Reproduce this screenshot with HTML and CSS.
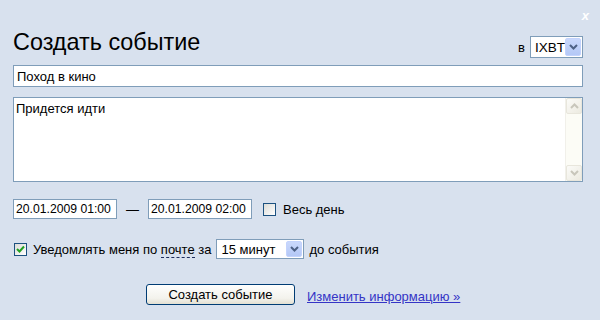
FILE: index.html
```html
<!DOCTYPE html>
<html>
  <head>
    <meta charset="UTF-8">
    <title>Создать событие</title>
    <link rel="stylesheet" href="styles.css">
  </head>
  <body>
    <div class="dialog">
      <a href="javascript:;" class="close">x</a>

      <div class="head">
        <h1 class="title">Создать событие</h1>
        <div class="calendar">
          <span class="calendar-label">в</span>
          <div class="select select-calendar">
            <span class="select-value">IXBT</span>
            <span class="select-arrow">
              <svg width="9" height="6" viewBox="0 0 9 6"><path d="M1 1 L4.5 4.5 L8 1" fill="none" stroke="#4d6185" stroke-width="2"/></svg>
            </span>
          </div>
        </div>
      </div>

      <div class="field field-name">Поход в кино</div>

      <div class="field field-text">
        <div class="field-text-value">Придется идти</div>
        <div class="scrollbar">
          <span class="scroll-btn">
            <svg width="9" height="6" viewBox="0 0 9 6"><path d="M1 5 L4.5 1.5 L8 5" fill="none" stroke="#c8c6bb" stroke-width="2"/></svg>
          </span>
          <span class="scroll-track"></span>
          <span class="scroll-btn">
            <svg width="9" height="6" viewBox="0 0 9 6"><path d="M1 1 L4.5 4.5 L8 1" fill="none" stroke="#c8c6bb" stroke-width="2"/></svg>
          </span>
        </div>
      </div>

      <div class="row row-dates">
        <div class="field field-date">20.01.2009 01:00</div>
        <span class="dash">—</span>
        <div class="field field-date">20.01.2009 02:00</div>
        <span class="checkbox checkbox-allday"></span>
        <span class="label">Весь день</span>
      </div>

      <div class="row row-notify">
        <span class="checkbox checkbox-notify checked">
          <svg width="9" height="8" viewBox="0 0 9 8"><path d="M1 4 L3.5 6.5 L8 1.5" fill="none" stroke="#21a121" stroke-width="2"/></svg>
        </span>
        <span class="label">Уведомлять меня по <span class="dotted">почте</span> за</span>
        <div class="select select-remind">
          <span class="select-value">15 минут</span>
          <span class="select-arrow">
            <svg width="9" height="6" viewBox="0 0 9 6"><path d="M1 1 L4.5 4.5 L8 1" fill="none" stroke="#4d6185" stroke-width="2"/></svg>
          </span>
        </div>
        <span class="label">до события</span>
      </div>

      <div class="actions">
        <a href="javascript:;" class="button">Создать событие</a>
        <a href="javascript:;" class="more">Изменить информацию »</a>
      </div>
    </div>
  </body>
</html>
```

FILE: styles.css
```css
* {
  margin: 0;
  padding: 0;
  box-sizing: border-box;
}

body {
  background-color: #d8e1ee;
  font-family: "Liberation Sans", Arial, sans-serif;
  font-size: 13px;
  color: #000;
}

.dialog {
  position: relative;
  width: 600px;
  height: 320px;
  padding: 28px 17px 0 13px;
}

.close {
  position: absolute;
  right: 11px;
  top: 8px;
  color: #fff;
  font-size: 13px;
  font-weight: bold;
  font-style: italic;
  text-decoration: none;
}

.head {
  display: flex;
  justify-content: space-between;
  align-items: flex-start;
  height: 30px;
}

.title {
  font-size: 23.4px;
  font-weight: normal;
  line-height: 28px;
}

.calendar {
  display: flex;
  align-items: baseline;
  margin-top: 8px;
}

.calendar-label {
  margin-right: 5px;
}

.select {
  display: flex;
  align-items: stretch;
  border: 1px solid #7f9db9;
  background-color: #fff;
  padding: 1px;
  white-space: nowrap;
}

.select-value {
  flex: 1;
  padding-left: 3px;
  align-self: center;
}

.select-calendar {
  width: 53px;
  height: 22px;
  font-size: 13.5px;
}

.select-remind {
  width: 88px;
  height: 20px;
  font-size: 13px;
}

.select-arrow {
  width: 16px;
  display: flex;
  align-items: center;
  justify-content: center;
  border: 1px solid #c3d3fd;
  border-radius: 2px;
  background: linear-gradient(#c9d8fc, #b4c8f6);
}

.field {
  border: 1px solid #7f9db9;
  background-color: #fff;
  white-space: nowrap;
}

.field-name {
  margin-top: 7px;
  height: 22px;
  padding: 3px 3px 0;
}

.field-text {
  display: flex;
  margin-top: 10px;
  height: 85px;
}

.field-text-value {
  flex: 1;
  padding: 3px 2px;
}

.scrollbar {
  width: 17px;
  display: flex;
  flex-direction: column;
  background-color: #fcfcf6;
  border-left: 1px solid #f1f0ea;
}

.scroll-btn {
  height: 16px;
  display: flex;
  align-items: center;
  justify-content: center;
  background: linear-gradient(135deg, #fbfbf8, #eceae0);
  border: 1px solid #e8e6dc;
  border-radius: 2px;
}

.scroll-track {
  flex: 1;
}

.row {
  display: flex;
  align-items: center;
  height: 20px;
}

.row-dates {
  margin-top: 17px;
}

.row-notify {
  margin-top: 20px;
}

.field-date {
  width: 104px;
  height: 20px;
  padding: 2px 0 0 2px;
  font-size: 12.2px;
}

.dash {
  margin: 0 9px;
}

.checkbox {
  width: 13px;
  height: 13px;
  display: flex;
  align-items: center;
  justify-content: center;
  border: 1px solid #1c5180;
  background: linear-gradient(135deg, #dcdcd7, #fff);
}

.checkbox-allday {
  margin: 0 7px 0 11px;
}

.checkbox-notify {
  margin: 0 6px 0 1px;
}

.dotted {
  border-bottom: 1px dashed #1d2c5c;
}

.select-remind {
  margin: 0 5px;
}

.actions {
  display: flex;
  align-items: flex-end;
  margin-top: 25px;
  padding-left: 133px;
  gap: 12px;
}

.button {
  width: 149px;
  height: 21px;
  line-height: 19px;
  text-align: center;
  color: #000;
  text-decoration: none;
  border: 1px solid #003c74;
  border-radius: 3px;
  background: linear-gradient(#fefefd, #f3f2ec 70%, #e3e0d2);
}

.more {
  color: #3434c6;
  margin-bottom: 1px;
}
```
